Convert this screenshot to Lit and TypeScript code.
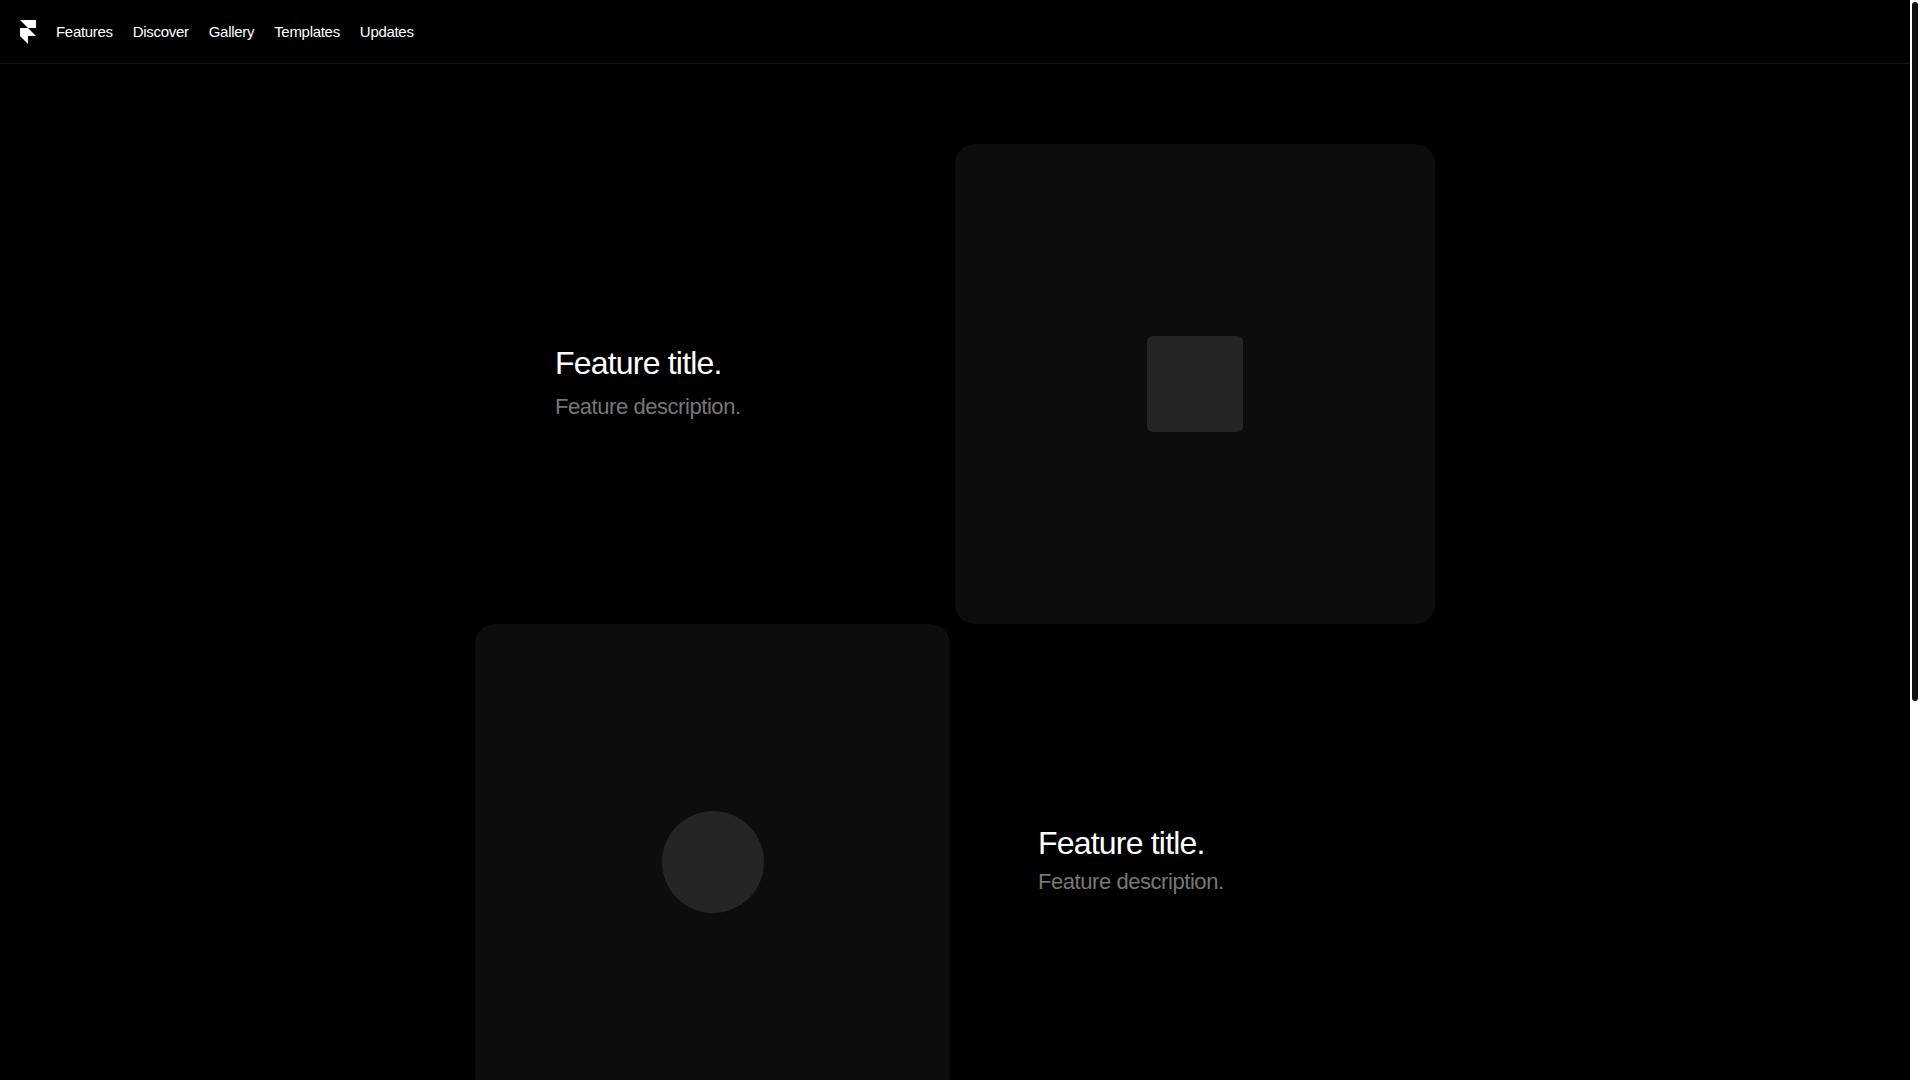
import { LitElement, html, css } from "lit";
import { customElement } from "lit/decorators.js";

const LINKS = ["Features", "Discover", "Gallery", "Templates", "Updates"];

@customElement("app-root")
export class AppRoot extends LitElement {
  static styles = css`
    :host {
      display: flex;
      height: 100vh;
      overflow: hidden;
      background: #000;
      color: #fff;
      font-family: "Liberation Sans", Arial, sans-serif;
    }
    .page {
      flex: 1;
      min-width: 0;
      overflow-y: auto;
      scrollbar-width: none;
    }
    .track {
      box-sizing: border-box;
      width: 10px;
      padding: 2px;
      background: #fff;
    }
    .thumb {
      height: 65%;
      background: #111;
      border-radius: 3px;
    }
    .bar {
      box-sizing: border-box;
      height: 64px;
      padding: 0 20px;
      display: flex;
      align-items: center;
      gap: 20px;
      border-bottom: 1px solid #161616;
    }
    .logo {
      display: flex;
    }
    .nav {
      display: flex;
      gap: 20px;
    }
    .link {
      color: #fff;
      text-decoration: none;
      font-size: 15px;
      line-height: 24px;
      letter-spacing: -0.02em;
    }
    .features {
      max-width: 960px;
      margin: 0 auto;
      padding: 80px 0;
    }
    .feature {
      display: grid;
      grid-template-columns: 1fr 1fr;
    }
    .feature.reversed {
      column-gap: 10px;
    }
    .card {
      aspect-ratio: 1;
      display: flex;
      align-items: center;
      justify-content: center;
      background: #0d0d0d;
      border-radius: 20px;
    }
    .shape {
      width: 20%;
      aspect-ratio: 1;
      background: #252525;
      border-radius: 6px;
    }
    .round {
      width: 102px;
      border-radius: 50%;
    }
    .copy {
      padding: 0 80px;
      display: flex;
      flex-direction: column;
      justify-content: center;
      gap: 9px;
    }
    .reversed .copy {
      padding: 0 78px;
      gap: 4px;
    }
    .title,
    .text {
      margin: 0;
      font-weight: 400;
    }
    .title {
      font-size: 32px;
      line-height: 36px;
      letter-spacing: -0.025em;
    }
    .text {
      font-size: 22px;
      line-height: 33px;
      letter-spacing: -0.02em;
      color: #777;
    }
  `;

  private copy() {
    return html`<div class="copy">
      <h2 class="title">Feature title.</h2>
      <p class="text">Feature description.</p>
    </div>`;
  }

  render() {
    return html`
      <div class="page">
        <header class="bar">
          <a class="logo" href="#" aria-label="Home">
            <svg width="16" height="24" viewBox="0 0 16 24" fill="#fff" aria-hidden="true">
              <path d="M0 0h16v8H8zM0 8h8l8 8H8v8l-8-8z" />
            </svg>
          </a>
          <nav class="nav">
            ${LINKS.map((l) => html`<a class="link" href="#${l.toLowerCase()}">${l}</a>`)}
          </nav>
        </header>
        <main class="features">
          <section class="feature">
            ${this.copy()}
            <div class="card"><div class="shape"></div></div>
          </section>
          <section class="feature reversed">
            <div class="card"><div class="shape round"></div></div>
            ${this.copy()}
          </section>
        </main>
      </div>
      <div class="track" aria-hidden="true"><div class="thumb"></div></div>
    `;
  }
}
